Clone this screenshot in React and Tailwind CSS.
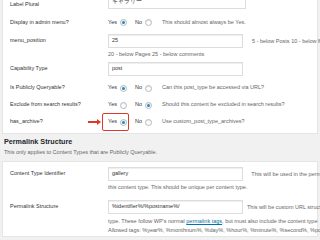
import React from "react";

const Radio = ({ checked }) => (
  <span className="inline-flex h-[7px] w-[7px] items-center justify-center rounded-full border border-[#b4b9be] bg-white shadow-[inset_0_1px_1px_rgba(0,0,0,0.1)]">
    {checked && <span className="h-[3px] w-[3px] rounded-full bg-[#1e8cbe]" />}
  </span>
);

const TextInput = ({ value, className = "" }) => (
  <div
    className={`flex h-[14px] w-[135px] items-center border border-[#ddd] bg-white px-[3px] text-[5.5px] text-[#333] shadow-[inset_0_1px_1px_rgba(0,0,0,0.07)] ${className}`}
  >
    {value}
  </div>
);

const RadioRow = ({ label, yes, desc, highlight }) => (
  <div className="flex h-[17px] items-center">
    <div className="w-[98px] shrink-0">{label}</div>
    <div className="relative flex items-center gap-[2px]">
      {highlight && (
        <>
          <span className="absolute left-[-20px] top-[2.5px] h-[1.5px] w-[10px] bg-[#e0392b]" />
          <span className="absolute left-[-11px] top-[0.5px] h-0 w-0 border-y-[3px] border-l-[4px] border-y-transparent border-l-[#e0392b]" />
          <span className="absolute left-[-6px] top-[-6px] h-[18px] w-[27px] rounded-[2px] border-[1.5px] border-[#e0392b]" />
        </>
      )}
      <span className="w-[10px]">Yes</span>
      <Radio checked={yes} />
    </div>
    <div className="ml-[8px] flex items-center gap-[2px]">
      <span className="w-[8px]">No</span>
      <Radio checked={!yes} />
    </div>
    <div className="ml-[10px] whitespace-nowrap text-[#666]">{desc}</div>
  </div>
);

export default function App() {
  return (
    <div
      className="h-[240px] w-[320px] overflow-hidden bg-[#f1f1f1] text-[5.5px] leading-none text-[#333]"
      style={{ fontFamily: '"Liberation Sans", Arial, sans-serif' }}
    >
      {/* Post type settings */}
      <div className="mx-[2px] mt-[-6px] border-x border-b border-[#e5e5e5] bg-white pl-[7px] pb-[2px]">
        <div className="flex h-[15px] items-center">
          <div className="w-[98px] shrink-0 pt-[6px]">Label Plural</div>
          <TextInput value="ギャラリー" className="h-[15px] w-[138px]" />
        </div>

        <div className="mt-[5px]">
          <RadioRow label="Display in admin menu?" yes desc="This should almost always be Yes." />
        </div>

        <div className="mt-[3px] flex items-start">
          <div className="w-[98px] shrink-0 pt-[4px]">menu_position</div>
          <div>
            <TextInput value="25" />
            <div className="mt-[4px] whitespace-nowrap text-[#666]">20 - below Pages 25 - below comments</div>
          </div>
          <div className="ml-[9px] mt-[5px] whitespace-nowrap text-[#666]">5 - below Posts 10 - below Media</div>
        </div>

        <div className="mt-[4px] flex items-center">
          <div className="w-[98px] shrink-0">Capability Type</div>
          <TextInput value="post" />
        </div>

        <div className="mt-[4px]">
          <RadioRow label="Is Publicly Queryable?" yes desc="Can this post_type be accessed via URL?" />
          <RadioRow label="Exclude from search results?" yes={false} desc="Should this content be excluded in search results?" />
          <RadioRow label="has_archive?" yes highlight desc="Use custom_post_type_archives?" />
        </div>
      </div>

      {/* Permalink Structure */}
      <div className="px-[4px] pt-[4px]">
        <h2 className="text-[7.2px] font-bold text-[#23282d]">Permalink Structure</h2>
        <p className="mt-[5px] whitespace-nowrap text-[#666]">This only applies to Content Types that are Publicly Queryable.</p>
      </div>

      <div className="mx-[2px] mt-[6px] h-[76px] border border-[#e5e5e5] bg-white pl-[7px] pt-[5px]">
        <div className="flex items-start">
          <div className="w-[98px] shrink-0 pt-[4px]">Content Type Identifier</div>
          <div>
            <TextInput value="gallery" />
            <div className="mt-[4px] whitespace-nowrap text-[#666]">
              this content type. This should be unique per content type.
            </div>
          </div>
          <div className="ml-[4px] mt-[5px] whitespace-nowrap text-[#666]">This will be used in the permalink structure for</div>
        </div>

        <div className="mt-[9px] flex items-start">
          <div className="w-[98px] shrink-0 pt-[4px]">Permalink Structure</div>
          <div>
            <TextInput value="%identifier%/%postname%/" />
          </div>
          <div className="ml-[4px] mt-[5px] whitespace-nowrap text-[#666]">This will be custom URL structure for this content</div>
        </div>
        <div className="ml-[98px] mt-[5px] whitespace-nowrap text-[#666]">
          type. These follow WP's normal{" "}
          <span className="text-[#0073aa] underline">permalink tags</span>, but must also include the content type
        </div>
        <div className="ml-[98px] mt-[4px] whitespace-nowrap text-[#666]">
          Allowed tags: %year%, %monthnum%, %day%, %hour%, %minute%, %second%, %post_id%
        </div>
      </div>
    </div>
  );
}
